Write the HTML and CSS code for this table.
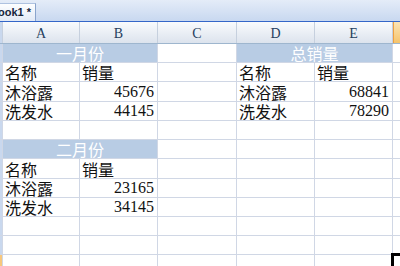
FILE: index.html
```html
<!DOCTYPE html>
<html lang="zh">
<head>
<meta charset="utf-8">
<title>Book1</title>
<link rel="stylesheet" href="styles.css">
</head>
<body>
<div class="tabbar">
  <div class="tab"><span class="tab-label">ook1 *</span></div>
</div>
<div class="colhead">
  <div class="ch ch-rh"></div>
  <div class="ch">A</div>
  <div class="ch">B</div>
  <div class="ch">C</div>
  <div class="ch">D</div>
  <div class="ch">E</div>
  <div class="ch ch-sel"></div>
</div>
<div class="sheet">
  <!-- row 1 -->
  <div class="c rh"></div>
  <div class="c band">一月份</div>
  <div class="c"></div>
  <div class="c band">总销量</div>
  <div class="c"></div>
  <!-- row 2 -->
  <div class="c rh"></div>
  <div class="c">名称</div>
  <div class="c">销量</div>
  <div class="c"></div>
  <div class="c">名称</div>
  <div class="c">销量</div>
  <div class="c"></div>
  <!-- row 3 -->
  <div class="c rh"></div>
  <div class="c">沐浴露</div>
  <div class="c num">45676</div>
  <div class="c"></div>
  <div class="c">沐浴露</div>
  <div class="c num">68841</div>
  <div class="c"></div>
  <!-- row 4 -->
  <div class="c rh"></div>
  <div class="c">洗发水</div>
  <div class="c num">44145</div>
  <div class="c"></div>
  <div class="c">洗发水</div>
  <div class="c num">78290</div>
  <div class="c"></div>
  <!-- row 5 -->
  <div class="c rh"></div>
  <div class="c"></div><div class="c"></div><div class="c"></div><div class="c"></div><div class="c"></div><div class="c"></div>
  <!-- row 6 -->
  <div class="c rh"></div>
  <div class="c band">二月份</div>
  <div class="c"></div><div class="c"></div><div class="c"></div><div class="c"></div>
  <!-- row 7 -->
  <div class="c rh"></div>
  <div class="c">名称</div>
  <div class="c">销量</div>
  <div class="c"></div><div class="c"></div><div class="c"></div><div class="c"></div>
  <!-- row 8 -->
  <div class="c rh"></div>
  <div class="c">沐浴露</div>
  <div class="c num">23165</div>
  <div class="c"></div><div class="c"></div><div class="c"></div><div class="c"></div>
  <!-- row 9 -->
  <div class="c rh"></div>
  <div class="c">洗发水</div>
  <div class="c num">34145</div>
  <div class="c"></div><div class="c"></div><div class="c"></div><div class="c"></div>
  <!-- row 10 -->
  <div class="c rh"></div>
  <div class="c"></div><div class="c"></div><div class="c"></div><div class="c"></div><div class="c"></div><div class="c"></div>
  <!-- row 11 -->
  <div class="c rh"></div>
  <div class="c"></div><div class="c"></div><div class="c"></div><div class="c"></div><div class="c"></div><div class="c"></div>
  <!-- row 12 -->
  <div class="c rh rh-sel"></div>
  <div class="c"></div><div class="c"></div><div class="c"></div><div class="c"></div><div class="c"></div>
  <div class="c sel"></div>
</div>
</body>
</html>
```
FILE: styles.css
```css
html, body {
  margin: 0;
  padding: 0;
}
body {
  width: 400px;
  height: 266px;
  overflow: hidden;
  display: flex;
  flex-direction: column;
  background: #fff;
  font-family: "Noto Sans CJK SC", "Noto Sans", sans-serif;
}
.tabbar {
  height: 21px;
  flex: none;
  border-bottom: 1px solid #3466c8;
  background: linear-gradient(#e4ecf8, #c8d8f0);
  display: flex;
  align-items: flex-end;
}
.tab {
  width: 35px;
  height: 17px;
  border-right: 1px solid #8aa4cc;
  border-top: 1px solid #aec2e0;
  background: linear-gradient(#fdfeff, #e2eaf6);
  font: bold 11px "Liberation Sans", sans-serif;
  line-height: 17px;
  color: #17263d;
  overflow: hidden;
  white-space: nowrap;
}
.tab-label {
  margin-left: -2px;
}
.colhead {
  flex: none;
  height: 21px;
  display: grid;
  grid-template-columns: 2px 76px 77px 78px 77px 77px 77px;
  column-gap: 1px;
  background: #c6d0de;
  border-bottom: 1px solid #9eb6ce;
  overflow: hidden;
}
.ch {
  background: linear-gradient(#f9fbfd, #dce3ed);
  display: flex;
  align-items: center;
  justify-content: center;
  font: 14px "Liberation Serif", serif;
  color: #263f5e;
  padding-top: 2px;
}
.ch-rh {
  background: #c9d8ee;
}
.ch-sel {
  background: linear-gradient(#fbe4b5, #f5c46c);
  box-shadow: inset 1px 0 #f0a040;
}
.sheet {
  flex: 1;
  display: grid;
  grid-template-columns: 2px 76px 77px 78px 77px 77px 77px;
  grid-template-rows: 18px 18px 19px 18px 18px 18px 19px 18px 18px 18px 18px 19px;
  gap: 1px;
  background: #d0d7e5;
  overflow: hidden;
}
.c {
  background: #fff;
  display: flex;
  align-items: center;
  padding: 0 2px;
  font-size: 16px;
  line-height: 18px;
  color: #111;
  white-space: nowrap;
  overflow: hidden;
}
.rh {
  padding: 0;
  background: #c9d8ee;
}
.rh-sel {
  background: #f7c77d;
}
.band {
  grid-column: span 2;
  background: #b8cce4;
  color: #fff;
  justify-content: center;
}
.num {
  justify-content: flex-end;
  font-family: "Liberation Serif", serif;
  padding-right: 3px;
}
.sel {
  overflow: visible;
  outline: 3px solid #000;
  outline-offset: -1px;
}
```
